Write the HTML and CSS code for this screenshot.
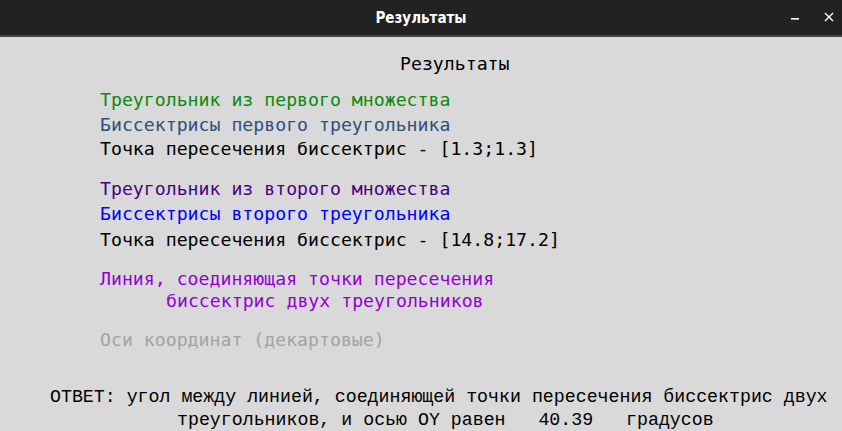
FILE: index.html
```html
<!DOCTYPE html>
<html lang="ru">
<head>
<meta charset="utf-8">
<title>Результаты</title>
<link rel="stylesheet" href="styles.css">
</head>
<body>
<div class="window">
  <div class="titlebar">
    <span class="title">Результаты</span>
    <div class="controls">
      <svg class="ctl" width="10" height="10" viewBox="0 0 10 10"><rect x="1" y="6" width="8" height="1.6" fill="#ffffff"/></svg>
      <svg class="ctl" width="10" height="10" viewBox="0 0 10 10"><path d="M1 1 L9 9 M9 1 L1 9" stroke="#ffffff" stroke-width="1.4" fill="none"/></svg>
    </div>
  </div>
  <div class="content">
    <div class="heading line">Результаты</div>
    <div class="group g1">
      <div class="line green">Треугольник из первого множества</div>
      <div class="line slate">Биссектрисы первого треугольника</div>
      <div class="line black">Точка пересечения биссектрис - [1.3;1.3]</div>
    </div>
    <div class="group g2">
      <div class="line indigo">Треугольник из второго множества</div>
      <div class="line blue">Биссектрисы второго треугольника</div>
      <div class="line black">Точка пересечения биссектрис - [14.8;17.2]</div>
    </div>
    <div class="group g3">
      <div class="line violet">Линия, соединяющая точки пересечения</div>
      <div class="line violet indent">биссектрис двух треугольников</div>
    </div>
    <div class="group g4">
      <div class="line gray">Оси координат (декартовые)</div>
    </div>
    <div class="answer">
      <div class="line a1">ОТВЕТ: угол между линией, соединяющей точки пересечения биссектрис двух</div>
      <div class="line a2">треугольников, и осью OY равен   40.39   градусов</div>
    </div>
  </div>
</div>
</body>
</html>
```

FILE: styles.css
```css
html, body {
  margin: 0;
  padding: 0;
}
body {
  width: 842px;
  height: 431px;
  overflow: hidden;
  background: #d9d9d9;
}
.window {
  display: flex;
  flex-direction: column;
}
.titlebar {
  height: 35px;
  background: #222222;
  border-bottom: 2px solid #454545;
  display: flex;
  align-items: center;
  justify-content: center;
  position: relative;
}
.title {
  font-family: "DejaVu Sans Condensed", "DejaVu Sans", sans-serif;
  font-stretch: condensed;
  font-weight: bold;
  font-size: 15px;
  color: #ffffff;
  padding-top: 1px;
}
.controls {
  position: absolute;
  right: 8px;
  top: 12px;
  display: flex;
  gap: 24px;
}
.ctl {
  display: block;
}
.content {
  font-family: "DejaVu Sans Mono", monospace;
  font-size: 18.2px;
  padding-top: 15px;
}
.line {
  white-space: pre;
}
.heading {
  line-height: 24px;
  padding-left: 400px;
  color: #000000;
}
.group {
  padding-left: 100px;
  line-height: 24.5px;
}
.g1 { margin-top: 12px; }
.g2 { margin-top: 14px; line-height: 25.5px; }
.g3 { margin-top: 16px; line-height: 22px; }
.g4 { margin-top: 16px; line-height: 24px; }
.indent { padding-left: 66px; }
.green { color: #0b8a0b; }
.slate { color: #2f4f7f; }
.black { color: #000000; }
.indigo { color: #4b0082; }
.blue { color: #0000ff; }
.violet { color: #9400d3; }
.gray { color: #a3a3a3; }
.answer {
  margin-top: 34px;
  font-family: "Liberation Mono", monospace;
  font-size: 18.25px;
  line-height: 23px;
  color: #000000;
}
.a1 { padding-left: 50px; }
.a2 { padding-left: 177px; }
```
